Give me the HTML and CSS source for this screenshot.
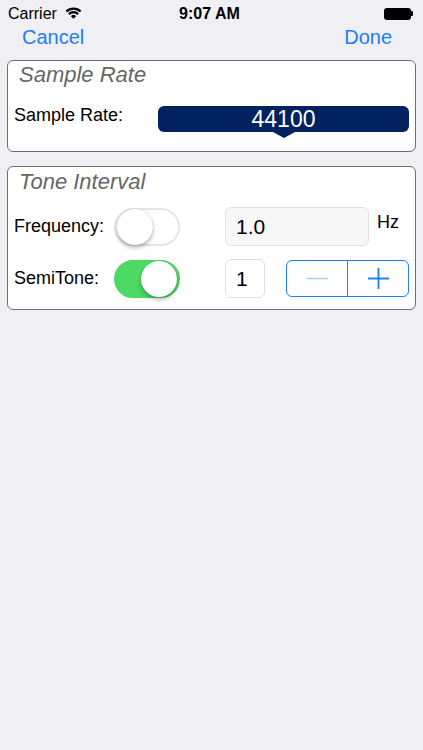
FILE: index.html
```html
<!DOCTYPE html>
<html lang="en">
<head>
    <meta charset="UTF-8">
    <meta name="viewport" content="width=device-width, initial-scale=1.0">
    <title>Settings</title>
    <link rel="stylesheet" href="styles.css">
</head>
<body>
    <div class="status">
        <div class="carrier">
            Carrier
            <svg class="wifi" width="17" height="12" viewBox="0 0 17 12">
                <path d="M1.4 4.6 A10 10 0 0 1 15.6 4.6" fill="none" stroke="#000" stroke-width="2.2"/>
                <path d="M3.9 7.1 A6.5 6.5 0 0 1 13.1 7.1" fill="none" stroke="#000" stroke-width="2.2"/>
                <path d="M8.5 11.8 L5.9 9.2 A3.6 3.6 0 0 1 11.1 9.2 Z" fill="#000"/>
            </svg>
        </div>
        <div class="time">9:07 AM</div>
        <div class="battery">
            <div class="battery-body"></div>
            <div class="battery-nub"></div>
        </div>
    </div>

    <div class="nav">
        <span class="nav-btn">Cancel</span>
        <span class="nav-btn">Done</span>
    </div>

    <div class="card">
        <div class="card-title">Sample Rate</div>
        <div class="rate-row">
            <div class="label rate-label">Sample Rate:</div>
            <div class="picker">
                <div class="picker-bar">44100</div>
                <div class="picker-arrow"></div>
            </div>
        </div>
    </div>

    <div class="card card-tone">
        <div class="card-title">Tone Interval</div>
        <div class="tone-row">
            <div class="label">Frequency:</div>
            <div class="switch"><div class="knob"></div></div>
            <div class="field field-freq">1.0</div>
            <div class="unit">Hz</div>
        </div>
        <div class="tone-row second">
            <div class="label">SemiTone:</div>
            <div class="switch on"><div class="knob"></div></div>
            <div class="field field-semi">1</div>
            <div class="stepper">
                <div class="step-btn">
                    <svg width="21" height="21" viewBox="0 0 21 21"><path d="M0 10.5 H21" stroke="#a9cff8" stroke-width="1.6"/></svg>
                </div>
                <div class="step-btn">
                    <svg width="21" height="21" viewBox="0 0 21 21"><path d="M0 10.5 H21 M10.5 0 V21" stroke="#1b7ff6" stroke-width="1.8"/></svg>
                </div>
            </div>
        </div>
    </div>
</body>
</html>
```

FILE: styles.css
```css
body {
    font-family: "Liberation Sans", Arial, sans-serif;
    margin: 0;
    padding: 0;
    background: #efeff4;
    color: #000;
    height: 100vh;
}
.status {
    height: 27px;
    padding: 0 10px 0 8px;
    display: flex;
    align-items: center;
    justify-content: space-between;
    font-size: 16px;
}
.carrier {
    display: flex;
    align-items: center;
    gap: 8px;
    width: 120px;
}
.wifi {
    margin-top: -2px;
}
.time {
    font-weight: bold;
    margin-left: -2px;
}
.battery {
    width: 120px;
    display: flex;
    align-items: center;
    justify-content: flex-end;
}
.battery-body {
    width: 27px;
    height: 12px;
    background: #000;
    border-radius: 3px;
}
.battery-nub {
    width: 2px;
    height: 5px;
    background: #000;
    border-radius: 0 1px 1px 0;
}
.nav {
    height: 21px;
    padding: 0 31px 0 22px;
    display: flex;
    align-items: center;
    justify-content: space-between;
}
.nav-btn {
    font-size: 20px;
    color: #1b7ff6;
}
.card {
    margin: 12px 7px 0 7px;
    background: #fff;
    border: 1px solid #6e6e6e;
    border-radius: 6px;
    padding: 1px 6px 13px 6px;
}
.card-tone {
    margin-top: 14px;
    padding-bottom: 11px;
}
.card-title {
    font-size: 22px;
    font-style: italic;
    line-height: 26px;
    color: #666;
    padding-left: 5px;
}
.card-tone .card-title {
    padding-top: 1px;
}
.label {
    font-size: 18px;
    width: 100px;
}
.rate-row {
    display: flex;
    margin-top: 18px;
}
.rate-label {
    width: 144px;
    line-height: 18px;
}
.picker {
    flex: 1;
    display: flex;
    flex-direction: column;
    align-items: center;
}
.picker-bar {
    align-self: stretch;
    height: 26px;
    line-height: 27px;
    background: #02215f;
    border-radius: 6px;
    color: #fff;
    font-size: 23px;
    text-align: center;
}
.picker-arrow {
    width: 0;
    height: 0;
    border-left: 11px solid transparent;
    border-right: 11px solid transparent;
    border-top: 6px solid #02215f;
}
.tone-row {
    display: flex;
    align-items: center;
    margin-top: 11px;
    height: 40px;
}
.tone-row.second {
    margin-top: 12px;
}
.switch {
    width: 66px;
    height: 38px;
    box-sizing: border-box;
    border: 2px solid #e6e6e6;
    border-radius: 19px;
    background: #fff;
    display: flex;
    align-items: center;
    padding: 0 1px;
    margin-top: 2px;
}
.switch.on {
    background: #4cd964;
    border-color: #4cd964;
    justify-content: flex-end;
}
.knob {
    width: 36px;
    height: 36px;
    border-radius: 50%;
    background: #fff;
    box-shadow: 0 3px 4px rgba(0, 0, 0, 0.25), 0 0 1px rgba(0, 0, 0, 0.3);
}
.field {
    margin-left: 45px;
    height: 39px;
    box-sizing: border-box;
    border: 1px solid #e0e0e0;
    border-radius: 6px;
    font-size: 21px;
    line-height: 37px;
    padding-left: 10px;
}
.field-freq {
    width: 144px;
    background: #f7f7f7;
}
.field-semi {
    width: 40px;
    background: #fff;
}
.unit {
    font-size: 18px;
    align-self: flex-start;
    margin: 6px 0 0 8px;
}
.stepper {
    margin-left: 21px;
    width: 123px;
    height: 37px;
    box-sizing: border-box;
    border: 1px solid #1b7ff6;
    border-radius: 6px;
    display: flex;
}
.step-btn {
    flex: 1;
    display: flex;
    align-items: center;
    justify-content: center;
}
.step-btn + .step-btn {
    border-left: 1px solid #1b7ff6;
}
```
